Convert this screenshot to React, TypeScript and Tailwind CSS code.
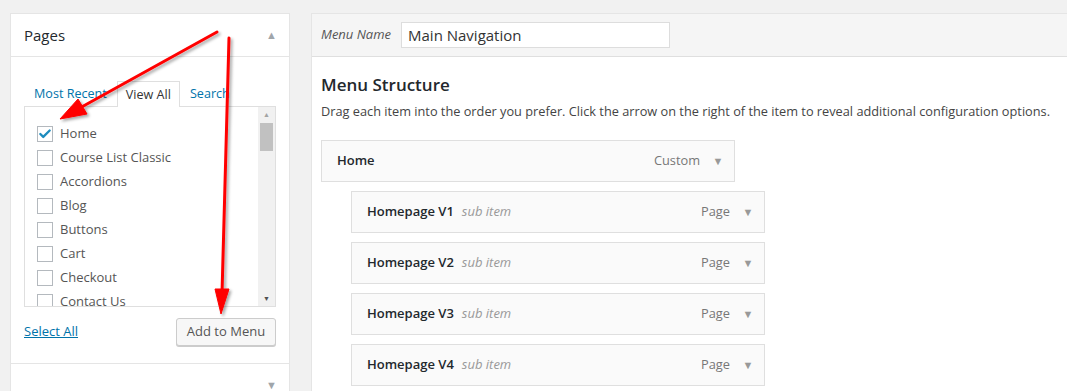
import { Check } from "lucide-react";

const pages = [
  { name: "Home", checked: true },
  { name: "Course List Classic" },
  { name: "Accordions" },
  { name: "Blog" },
  { name: "Buttons" },
  { name: "Cart" },
  { name: "Checkout" },
  { name: "Contact Us" },
];

const subItems = ["Homepage V1", "Homepage V2", "Homepage V3", "Homepage V4"];

function MenuItem({ title, type, sub }: { title: string; type: string; sub?: boolean }) {
  return (
    <div className="flex h-[42px] w-[414px] items-center border border-[#dfdfdf] bg-[#fafafa] pl-[15px] pr-[10px]">
      <span className="text-[13px] font-semibold text-[#23282d]">{title}</span>
      {sub && <span className="ml-[8px] text-[13px] italic text-[#999]">sub item</span>}
      <span className="ml-auto text-[12.8px] text-[#777]">{type}</span>
      <span className="ml-[12px] flex w-[12px] justify-center text-[11px] leading-none text-[#999]">▼</span>
    </div>
  );
}

export default function App() {
  return (
    <div className="relative h-[391px] w-[1067px] overflow-hidden bg-[#f1f1f1] font-['Open_Sans',sans-serif] text-[#444]">
      <div className="flex gap-[21px] pl-[10px] pt-[13px]">
        {/* Left: Pages accordion */}
        <div className="w-[280px] shrink-0 border border-[#e5e5e5] bg-white">
          <div className="flex h-[43px] items-center justify-between border-b border-[#e5e5e5] pl-[13px] pr-[12px]">
            <span className="text-[15px] text-[#23282d]">Pages</span>
            <span className="text-[11px] text-[#a0a5aa]">▲</span>
          </div>

          <div className="px-[13px] pt-[24px]">
            {/* Tabs */}
            <div className="flex items-end text-[12.6px]">
              <span className="px-[10px] pb-[2px] text-[#0073aa]">Most Recent</span>
              <span className="-mb-px h-[26px] border border-b-0 border-[#dfdfdf] bg-white px-[8px] pt-[4px] text-[#333]">
                View All
              </span>
              <span className="px-[10px] pb-[2px] text-[#0073aa]">Search</span>
            </div>

            {/* Tab panel */}
            <div className="flex h-[201px] overflow-hidden border border-[#dfdfdf] bg-white">
              <div className="flex flex-1 flex-col pl-[12px] pt-[15px]">
                {pages.map((p) => (
                  <div key={p.name} className="flex h-[24px] shrink-0 items-center gap-[7px]">
                    <span className="flex h-[16px] w-[16px] items-center justify-center border border-[#b4b9be] bg-white">
                      {p.checked && <Check className="h-[14px] w-[14px] text-[#1e8cbe]" strokeWidth={4} />}
                    </span>
                    <span className="text-[13px] text-[#555]">{p.name}</span>
                  </div>
                ))}
              </div>
              <div className="flex w-[17px] flex-col items-center bg-[#f1f1f1]">
                <span className="mt-[4px] text-[7px] leading-none text-[#a3a3a3]">▲</span>
                <div className="mt-[5px] h-[28px] w-[13px] bg-[#c1c1c1]" />
                <span className="mt-auto mb-[4px] text-[7px] leading-none text-[#505050]">▼</span>
              </div>
            </div>

            {/* Footer actions */}
            <div className="-mx-[13px] flex h-[57px] items-start justify-between border-b border-[#e5e5e5] px-[13px] pt-[11px]">
              <span className="pt-[4px] text-[13px] text-[#0073aa] underline">Select All</span>
              <span className="flex h-[28px] w-[100px] items-center justify-center rounded-[3px] border border-[#ccc] bg-[#f7f7f7] text-[13px] text-[#555] shadow-[0_1px_0_#ccc]">
                Add to Menu
              </span>
            </div>
          </div>

          <div className="flex h-[40px] justify-end pr-[12px] pt-[13px]">
            <span className="text-[11px] text-[#a0a5aa]">▼</span>
          </div>
        </div>

        {/* Right: Menu editor */}
        <div className="w-[800px] shrink-0 border border-[#e5e5e5] bg-white">
          <div className="flex h-[43px] items-center gap-[10px] border-b border-[#dfdfdf] bg-[#f5f5f5] pl-[9px]">
            <span className="text-[13px] italic text-[#555]">Menu Name</span>
            <div className="flex h-[26px] w-[269px] items-center border border-[#ddd] bg-white pl-[6px] text-[15px] text-[#333]">
              Main Navigation
            </div>
          </div>

          <div className="pl-[9px] pt-[15px]">
            <h3 className="text-[17px] font-semibold text-[#23282d]">Menu Structure</h3>
            <p className="mt-[4px] text-[12.75px] text-[#444]">
              Drag each item into the order you prefer. Click the arrow on the right of the item to reveal additional
              configuration options.
            </p>

            <div className="mt-[19px] flex flex-col gap-[9px]">
              <MenuItem title="Home" type="Custom" />
              {subItems.map((s) => (
                <div key={s} className="pl-[30px]">
                  <MenuItem title={s} type="Page" sub />
                </div>
              ))}
            </div>
          </div>
        </div>
      </div>

      {/* Red annotation arrows */}
      <svg className="pointer-events-none absolute inset-0" width="1067" height="391">
        <defs>
          <filter id="sh" x="-20%" y="-20%" width="140%" height="140%">
            <feDropShadow dx="2" dy="2" stdDeviation="1.5" floodColor="#000" floodOpacity="0.35" />
          </filter>
        </defs>
        <g filter="url(#sh)" fill="#f00" stroke="#f00">
          <line x1="217" y1="32" x2="78" y2="109" strokeWidth="3" strokeLinecap="round" />
          <polygon points="60,119 78,99 87,114" strokeWidth="1" />
          <line x1="229" y1="38" x2="222" y2="294" strokeWidth="3" strokeLinecap="round" />
          <polygon points="221,314 215,289 229,289" strokeWidth="1" />
        </g>
      </svg>
    </div>
  );
}
